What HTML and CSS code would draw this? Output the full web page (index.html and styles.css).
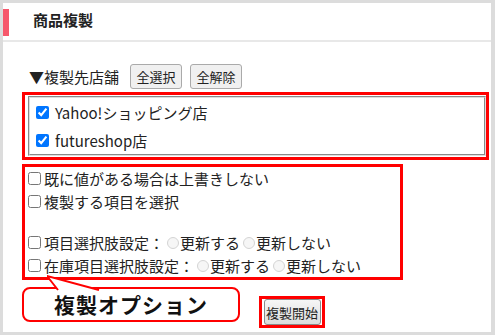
FILE: index.html
```html
<!DOCTYPE html>
<html lang="ja">
<head>
  <meta charset="UTF-8">
  <title>商品複製</title>
  <link rel="stylesheet" href="styles.css">
</head>
<body>

  <div class="panel">
    <div class="panel-head">
      <span class="head-bar"></span>
      <h2>商品複製</h2>
    </div>

    <div class="panel-body">
      <div class="shop-head">
        <span class="shop-title">▼複製先店舗</span>
        <button class="small-btn">全選択</button>
        <button class="small-btn">全解除</button>
      </div>

      <div class="mark mark-shops">
        <fieldset class="shop-list">
          <label class="row"><input type="checkbox" checked>Yahoo!ショッピング店</label>
          <label class="row"><input type="checkbox" checked>futureshop店</label>
        </fieldset>
      </div>

      <div class="mark mark-options">
        <label class="opt"><input type="checkbox">既に値がある場合は上書きしない</label>
        <label class="opt"><input type="checkbox">複製する項目を選択</label>
        <div class="spacer"></div>
        <div class="opt"><input type="checkbox">項目選択肢設定：<input type="radio" name="r1" class="radio">更新する<input type="radio" name="r1" class="radio">更新しない</div>
        <div class="opt"><input type="checkbox">在庫項目選択肢設定：<input type="radio" name="r2" class="radio">更新する<input type="radio" name="r2" class="radio">更新しない</div>
      </div>

      <div class="foot">
        <div class="callout">
          複製オプション
          <svg class="tail" width="60" height="18" viewBox="0 0 60 18">
            <polygon points="0,1 10,14 50,14" fill="#fff" stroke="none"/>
            <polyline points="11,15 0,1 52,15" fill="none" stroke="#f00" stroke-width="2"/>
          </svg>
        </div>
        <div class="mark mark-start">
          <button class="start-btn">複製開始</button>
        </div>
      </div>
    </div>
  </div>

</body>
</html>
```

FILE: styles.css
```css
* {
  box-sizing: border-box;
}

body {
  margin: 0;
  padding: 3px 4px 3px 3px;
  background: #dcdcdc;
  font-family: "Noto Sans CJK JP", "Noto Sans", sans-serif;
  font-size: 15px;
  color: #222;
}

.panel {
  background: #fff;
  height: 329px;
}

.panel-head {
  display: flex;
  align-items: flex-start;
  height: 39px;
  border-bottom: 2px solid #e8e8e8;
}

.head-bar {
  width: 6px;
  height: 27px;
  margin-top: 6px;
  background: #f6586c;
}

.panel-head h2 {
  margin: 7px 0 0 24px;
  font-size: 15px;
  line-height: 20px;
  font-weight: bold;
}

.panel-body {
  padding: 22px 2px 0 19px;
}

.shop-head {
  display: flex;
  align-items: center;
  height: 25px;
  margin-bottom: 3px;
}

.shop-title {
  margin-left: 7px;
  margin-right: 11px;
  line-height: 25px;
}

.small-btn {
  height: 25px;
  width: 52px;
  margin-right: 8px;
  padding: 0;
  font-family: inherit;
  font-size: 13px;
  color: #222;
  background: #f0f0f0;
  border: 1px solid #aaa;
  border-radius: 3px;
}

.mark {
  border: 3px solid #f00;
}

.mark-shops {
  padding: 1px 0 1px 3px;
}

.shop-list {
  margin: 0;
  padding: 0 4px;
  border: 2px groove #ddd;
}

.row {
  display: flex;
  align-items: center;
  height: 28px;
}

.row input,
.opt input[type="checkbox"] {
  width: 13px;
  height: 13px;
  margin: 0 6px 0 2px;
}

.mark-options {
  width: 381px;
  margin-top: 4px;
  padding: 0 0 0 3px;
}

.opt {
  display: flex;
  align-items: center;
  height: 23px;
  white-space: nowrap;
}

.opt input[type="checkbox"] {
  margin: 0 3px 0 0;
}

.spacer {
  height: 18px;
}

.radio {
  appearance: none;
  width: 12px;
  height: 12px;
  margin: 0 1px 0 3px;
  border: 1px solid #d4d4d4;
  border-radius: 50%;
  background: #f6f6f6;
}

.foot {
  display: flex;
  align-items: flex-start;
  margin-top: 7px;
}

.callout {
  position: relative;
  width: 218px;
  height: 35px;
  border: 2px solid #f00;
  border-radius: 8px;
  font-size: 21px;
  font-weight: bold;
  line-height: 31px;
  text-align: center;
  letter-spacing: 1px;
  color: #111;
}

.tail {
  position: absolute;
  left: 23px;
  top: -14px;
}

.mark-start {
  margin: 9px 0 0 19px;
  padding: 0;
  width: 66px;
  height: 32px;
  display: flex;
  align-items: center;
  justify-content: center;
}

.start-btn {
  width: 57px;
  height: 26px;
  padding: 0;
  font-family: inherit;
  font-size: 13px;
  color: #222;
  background: linear-gradient(#f6f6f6, #dcdcdc);
  border: 1px solid #8a8a8a;
  border-radius: 3px;
}
```
